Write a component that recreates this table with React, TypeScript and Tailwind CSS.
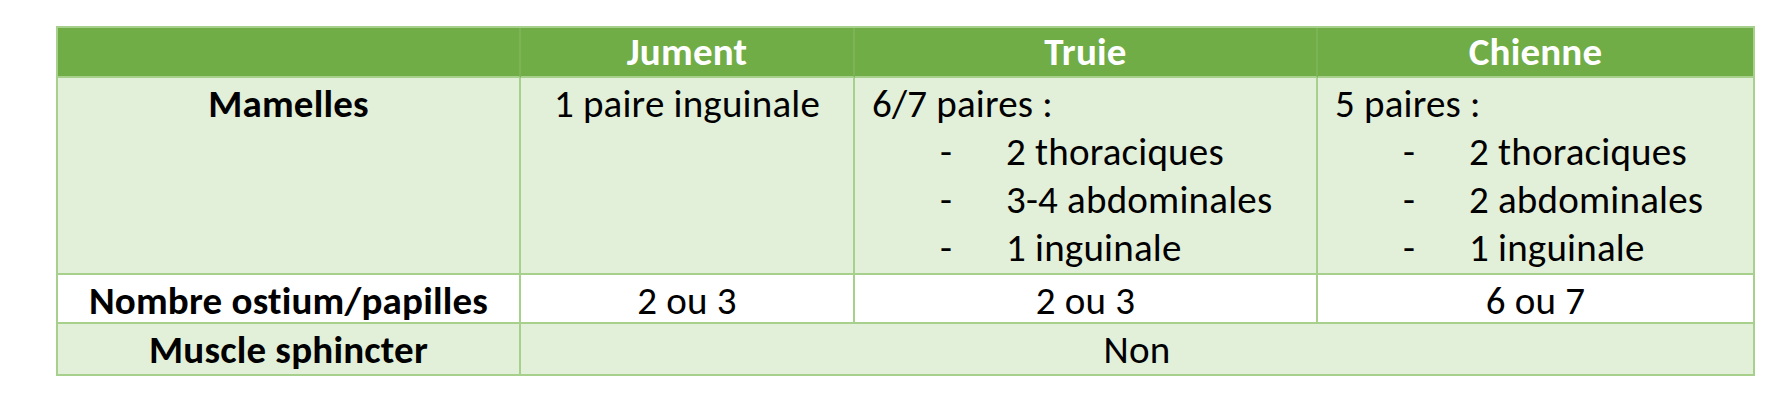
const font = { fontFamily: 'Calibri, Carlito, Lato, "Open Sans", sans-serif' };

type Bullet = { head: string; items: string[] };

const truie: Bullet = { head: '6/7 paires :', items: ['2 thoraciques', '3-4 abdominales', '1 inguinale'] };
const chienne: Bullet = { head: '5 paires :', items: ['2 thoraciques', '2 abdominales', '1 inguinale'] };

function BulletCell({ data, last }: { data: Bullet; last?: boolean }) {
  return (
    <div className={`bg-[#e2efd9] border-b-2 border-[#a8d08d] pl-[17px] pt-[2px] ${last ? '' : 'border-r-2'}`}>
      <div>{data.head}</div>
      {data.items.map((item) => (
        <div key={item} className="flex">
          <span className="w-[134px] shrink-0 pl-[68px]">-</span>
          <span>{item}</span>
        </div>
      ))}
    </div>
  );
}

export default function App() {
  return (
    <div className="min-h-[402px] w-[1778px] bg-white pt-[26px] pl-[56px]" style={font}>
      <div className="w-[1699px] border-2 border-[#a8d08d] text-[39px] leading-[48px] tracking-[0.2px] text-black">
        <div className="grid grid-cols-[463px_334px_463px_435px] grid-rows-[50px_197px_49px_50px]">
          {/* header */}
          <div className="bg-[#70ad47] border-r-2 border-b-2 border-r-[#7cb455] border-b-[#a8d08d]" />
          {['Jument', 'Truie', 'Chienne'].map((h, i) => (
            <div
              key={h}
              className={`bg-[#70ad47] border-b-2 border-b-[#a8d08d] text-center font-bold text-white ${i < 2 ? 'border-r-2 border-r-[#7cb455]' : ''}`}
            >
              {h}
            </div>
          ))}

          {/* Mamelles */}
          <div className="bg-[#e2efd9] border-r-2 border-b-2 border-[#a8d08d] text-center font-bold pt-[2px]">Mamelles</div>
          <div className="bg-[#e2efd9] border-r-2 border-b-2 border-[#a8d08d] text-center pt-[2px]">1 paire inguinale</div>
          <BulletCell data={truie} />
          <BulletCell data={chienne} last />

          {/* ostium */}
          <div className="bg-white border-r-2 border-b-2 border-[#a8d08d] text-center font-bold pt-[2px]">Nombre ostium/papilles</div>
          <div className="bg-white border-r-2 border-b-2 border-[#a8d08d] text-center pt-[2px]">2 ou 3</div>
          <div className="bg-white border-r-2 border-b-2 border-[#a8d08d] text-center pt-[2px]">2 ou 3</div>
          <div className="bg-white border-b-2 border-[#a8d08d] text-center pt-[2px]">6 ou 7</div>

          {/* sphincter */}
          <div className="bg-[#e2efd9] border-r-2 border-[#a8d08d] text-center font-bold pt-[2px]">Muscle sphincter</div>
          <div className="col-span-3 bg-[#e2efd9] text-center pt-[2px]">Non</div>
        </div>
      </div>
    </div>
  );
}
